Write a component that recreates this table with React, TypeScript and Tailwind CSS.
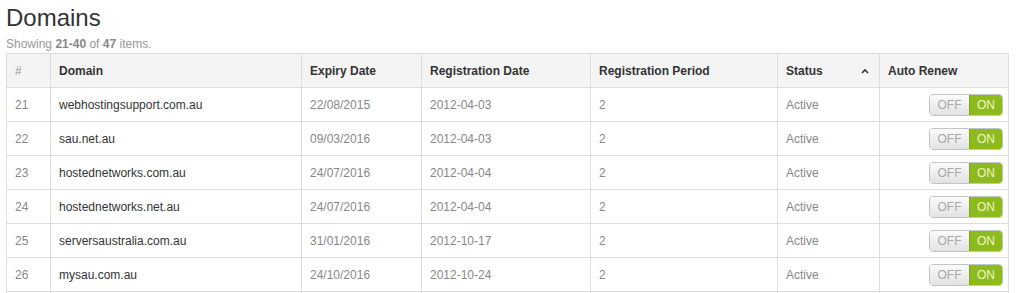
const rows = [
  { id: 21, domain: "webhostingsupport.com.au", expiry: "22/08/2015", reg: "2012-04-03", period: "2" },
  { id: 22, domain: "sau.net.au", expiry: "09/03/2016", reg: "2012-04-03", period: "2" },
  { id: 23, domain: "hostednetworks.com.au", expiry: "24/07/2016", reg: "2012-04-04", period: "2" },
  { id: 24, domain: "hostednetworks.net.au", expiry: "24/07/2016", reg: "2012-04-04", period: "2" },
  { id: 25, domain: "serversaustralia.com.au", expiry: "31/01/2016", reg: "2012-10-17", period: "2" },
  { id: 26, domain: "mysau.com.au", expiry: "24/10/2016", reg: "2012-10-24", period: "2" },
  { id: 27, domain: "serversaustralia.net.au", expiry: "24/10/2016", reg: "2012-10-24", period: "2" },
];

function Toggle() {
  return (
    <div className="ml-auto flex h-[22px] w-[74px] overflow-hidden rounded-[4px] border border-[#c4c4c4] text-[12px] leading-none">
      <span className="flex w-[39px] items-center justify-center bg-gradient-to-b from-[#fbfbfb] to-[#e2e2e2] text-[#a8a8a8]">
        OFF
      </span>
      <span className="flex flex-1 items-center justify-center border-l border-[#7ea814] bg-[#8dba1c] text-[#eef5c8]">
        ON
      </span>
    </div>
  );
}

export default function App() {
  const cell = "h-[34px] border border-[#dddddd] px-2 align-middle text-[12px]";
  const th = cell + " text-left font-bold text-[#333333]";
  const td = cell + " text-[#888888]";

  return (
    <div className="bg-white px-[6px] font-['Liberation_Sans',Arial,sans-serif]">
      <h1 className="mt-[5px] text-[24px] leading-[26px] font-normal text-[#333333]">Domains</h1>
      <p className="mt-[5px] text-[12px] leading-[17px] text-[#999999]">
        Showing <b className="text-[#888888]">21-40</b> of <b className="text-[#888888]">47</b> items.
      </p>
      <table className="w-[1002px] table-fixed border-collapse">
        <colgroup>
          <col className="w-[44px]" />
          <col className="w-[251px]" />
          <col className="w-[120px]" />
          <col className="w-[169px]" />
          <col className="w-[187px]" />
          <col className="w-[102px]" />
          <col className="w-[129px]" />
        </colgroup>
        <thead>
          <tr className="bg-[#f4f4f4]">
            <th className={cell + " text-left font-normal text-[#999999]"}>#</th>
            <th className={th}>Domain</th>
            <th className={th}>Expiry Date</th>
            <th className={th}>Registration Date</th>
            <th className={th}>Registration Period</th>
            <th className={th}>
              <div className="flex items-center justify-between">
                <span>Status</span>
                <svg width="8" height="6" viewBox="0 0 8 6" className="mr-[2px]">
                  <path d="M1 5 L4 2 L7 5" fill="none" stroke="#333333" strokeWidth="1.6" />
                </svg>
              </div>
            </th>
            <th className={th}>Auto Renew</th>
          </tr>
        </thead>
        <tbody>
          {rows.map((r) => (
            <tr key={r.id}>
              <td className={td}>{r.id}</td>
              <td className={cell + " text-[#333333]"}>{r.domain}</td>
              <td className={td}>{r.expiry}</td>
              <td className={td}>{r.reg}</td>
              <td className={td}>{r.period}</td>
              <td className={td}>Active</td>
              <td className={td + " pr-[5px]"}>
                <Toggle />
              </td>
            </tr>
          ))}
        </tbody>
      </table>
    </div>
  );
}
